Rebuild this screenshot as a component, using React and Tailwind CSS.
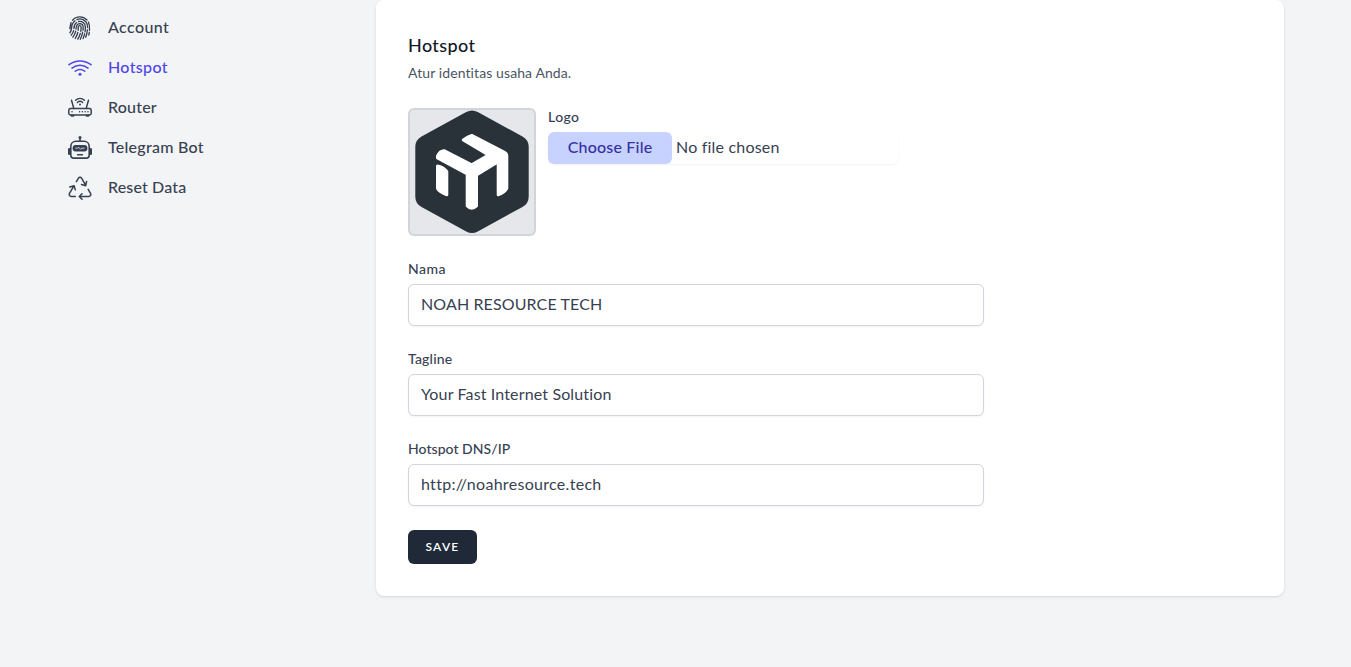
const stroke = { fill: "none", stroke: "currentColor", strokeLinecap: "round", strokeLinejoin: "round" };

function FingerprintIcon() {
  return (
    <svg viewBox="0 0 24 24" className="size-6" {...stroke} strokeWidth="1.350">
      <path d="M4.500 4.300C6.300 2 8.900.8 11.800.8c2.900 0 5.400 1.200 7.200 3.200M20.400 6c1.200 2.400 1.300 5.500 1.100 8.300M21.300 16.300l-.5 2.700" />
      <path d="M1.800 12.600c.8-1.600.3-4 1.300-6M1.900 16.800c2.300-3 1.400-5.500 2.100-7.800.5-1.700 1.500-3.200 2.900-4.300M9 3.500c3.200-1.100 6.700-.2 8.800 2.200 1.500 1.700 1.800 3.700 1.800 5.900M19.400 13.800c-.2 2.700-.8 5.200-1.700 7.500" />
      <path d="M3.200 19.200c1.200-1.500 2-3 2.400-4.600M5.900 12.500c0-2.700.8-4.700 2.700-6M10.600 5.500c3.600-.7 6.700 1.700 6.800 5.400 0 1.700-.1 3.300-.4 4.900M16.600 17.800c-.4 1.700-.9 3.200-1.500 4.700" />
      <path d="M4.900 21.200c1.500-2 2.400-4 2.800-6M8 13c.1-2.600.3-5.300 3.700-5.400 2.200 0 3.500 1.500 3.500 3.700 0 1-.1 2-.2 3M14.600 16.300c-.5 2.500-1.300 4.900-2.300 6.900" />
      <path d="M7.200 22.500c1.200-1.900 2.100-3.900 2.600-6M10.100 14.300l.2-3.400c.1-.9.600-1.300 1.400-1.300 1 0 1.400.7 1.400 1.700 0 1.400-.1 2.700-.3 4M12.300 17.400c-.6 2.100-1.400 4-2.500 5.700" />
    </svg>
  );
}

function WifiIcon() {
  return (
    <svg viewBox="0 0 24 24" className="size-6" {...stroke} strokeWidth="1.500">
      <path d="M1 8.700c6.500-5 15.500-5 22 0M4 12.100c4.800-3.700 11.200-3.700 16 0M7.300 15.200c2.900-2 6.500-2 9.400 0" />
      <circle cx="12" cy="18.300" r="1.500" fill="currentColor" stroke="none" />
    </svg>
  );
}

function RouterIcon() {
  return (
    <svg viewBox="0 0 24 24" className="size-6" {...stroke} strokeWidth="1.500">
      <rect x=".8" y="12.600" width="22.400" height="6.300" rx="1.600" />
      <path d="M5.800 12.400 3.500 4.200M18.200 12.400l2.300-8.200M3.500 19v.9h2V19M18.500 19v.9h2V19" />
      <path d="M7.600 4.200c2.600-2.400 6.200-2.400 8.800 0M9.300 6.500c1.600-1.400 3.800-1.400 5.400 0" strokeWidth="1.400" />
      <circle cx="12" cy="8.500" r="1" fill="currentColor" stroke="none" />
      <path d="M4 15.700h.1M11.500 15.700h.1M14.300 15.700h.1M17.100 15.700h.1M19.900 15.700h.1" strokeWidth="1.400" />
    </svg>
  );
}

function BotIcon() {
  return (
    <svg viewBox="0 0 24 24" className="size-6" {...stroke} strokeWidth="1.600">
      <path d="M12 2v3M8 5.300h8c3.100 0 5.200 2.200 5.200 5.200v8.700c0 1.700-1.200 2.900-2.900 2.900H5.700c-1.700 0-2.900-1.200-2.900-2.900v-8.700c0-3 2.100-5.200 5.200-5.200Z" />
      <circle cx="12" cy="1.500" r="1.500" fill="currentColor" stroke="none" />
      <rect x="4.600" y="8.900" width="14.800" height="6.600" rx="3" fill="currentColor" stroke="none" />
      <path d="M1.100 13v5M22.900 13v5" strokeWidth="2.200" />
      <path d="M9.500 18.800h5" strokeWidth="1.400" />
      <path d="M7.800 12.200h1.800l1-1 2 2.100 1.100-1.100h2.500" stroke="#f3f4f6" strokeWidth=".8" />
    </svg>
  );
}

function RecycleIcon() {
  return (
    <svg viewBox="0 0 24 24" className="size-6" {...stroke} strokeWidth="1.500">
      <path d="m8.400 5.600 1.900-3.300c.8-1.300 2.600-1.300 3.400 0l3.900 6.800M18.600 5.400l-.9 4.300-4.200-1.200" />
      <path d="m20.200 13.300 2.300 4c.8 1.500-.1 3.200-1.800 3.200H11.600M14 17.700l-2.700 2.800 2.700 2.800" />
      <path d="M7.300 20.500h-4c-1.700 0-2.600-1.700-1.800-3.200l4.400-7.400M1.800 11l4.300-1.300 1.200 4.200" />
    </svg>
  );
}

const items = [
  { label: "Account", icon: FingerprintIcon, tracking: "tracking-[0.4px]" },
  { label: "Hotspot", icon: WifiIcon, active: true, tracking: "tracking-[0.35px]" },
  { label: "Router", icon: RouterIcon, tracking: "tracking-[0.2px]" },
  { label: "Telegram Bot", icon: BotIcon, tracking: "tracking-[0.25px]" },
  { label: "Reset Data", icon: RecycleIcon, tracking: "tracking-[0.15px]" },
];

function Text({ className, children }) {
  return <span className={`inline-block -translate-y-px ${className}`}>{children}</span>;
}

function Field({ label, value, labelTracking, valueTracking }) {
  return (
    <div className="w-[576px]">
      <label className="block text-sm leading-5 font-medium"><Text className={labelTracking}>{label}</Text></label>
      <div className="mt-1 flex h-[42px] items-center rounded-md border border-[#d1d5db] bg-white px-3 text-base shadow-xs">
        <Text className={valueTracking}>{value}</Text>
      </div>
    </div>
  );
}

function LogoPreview() {
  return (
    <div className="size-32 rounded-md border-2 border-[#d1d5db] bg-[#e5e7eb]">
      <svg viewBox="0 0 124 124" className="size-full">
        <path d="M62 12.500 106.700 37V86.400L62 110.900 17.300 86.400V37Z" fill="#293239" stroke="#293239" strokeWidth="24" strokeLinejoin="round" />
        <g fill="#fff" stroke="#fff" strokeWidth="3" strokeLinejoin="round">
          <path d="M53.300 30Q58 26.200 61.700 25.400L94.500 42.300Q96.800 43.500 96.800 46V78.500Q95 82.500 88.200 84.800V51.800L66.500 65V96Q61.700 100.500 57.200 96V64L27.500 48V46.200Q30 40.500 34.500 40.800L61.700 54.800 78.500 45Z" />
          <path d="M27.500 56Q33 57 36.800 61.500V84.800Q29 82 27.500 78.500Z" />
        </g>
      </svg>
    </div>
  );
}

export default function App() {
  return (
    <div className="flex h-[667px] overflow-hidden bg-[#f3f4f6] font-[Lato,sans-serif] text-[#374151]">
      <nav className="flex w-[376px] shrink-0 flex-col gap-4 pt-4 pl-[68px]">
        {items.map(({ label, icon: Icon, tracking, active }) => (
          <a key={label} className={`flex h-6 items-center gap-4 font-medium ${active ? "text-[#4f46e5]" : ""}`}>
            <Icon />
            <Text className={tracking}>{label}</Text>
          </a>
        ))}
      </nav>
      <main className="h-[596px] w-[908px] rounded-lg bg-white p-8 shadow">
        <h2 className="text-lg leading-7 font-medium text-[#111827]"><Text className="tracking-[0.4px]">Hotspot</Text></h2>
        <p className="mt-1 text-sm leading-5 text-[#4b5563]"><Text className="tracking-[0.1px]">Atur identitas usaha Anda.</Text></p>
        <div className="mt-6 space-y-6">
          <div className="flex gap-3">
            <LogoPreview />
            <div>
              <label className="block text-sm leading-5 font-medium"><Text className="tracking-[0.4px]">Logo</Text></label>
              <div className="mt-1 flex h-8 w-[350px] items-center gap-1 rounded-md shadow-xs">
                <button className="h-8 w-[124px] rounded-md bg-[#c7d2fe] font-medium text-[#3730a3]"><Text className="tracking-[0.2px]">Choose File</Text></button>
                <Text className="tracking-[0.2px]">No file chosen</Text>
              </div>
            </div>
          </div>
          <Field label="Nama" value="NOAH RESOURCE TECH" labelTracking="tracking-[0.5px]" valueTracking="tracking-[0.12px]" />
          <Field label="Tagline" value="Your Fast Internet Solution" labelTracking="tracking-[0.2px]" valueTracking="tracking-[0.14px]" />
          <Field label="Hotspot DNS/IP" value="http://noahresource.tech" labelTracking="tracking-[0.04px]" valueTracking="tracking-[0.3px]" />
          <button className="h-[34px] w-[69px] rounded-md bg-[#1f2937] text-xs font-semibold tracking-widest text-white">SAVE</button>
        </div>
      </main>
    </div>
  );
}
